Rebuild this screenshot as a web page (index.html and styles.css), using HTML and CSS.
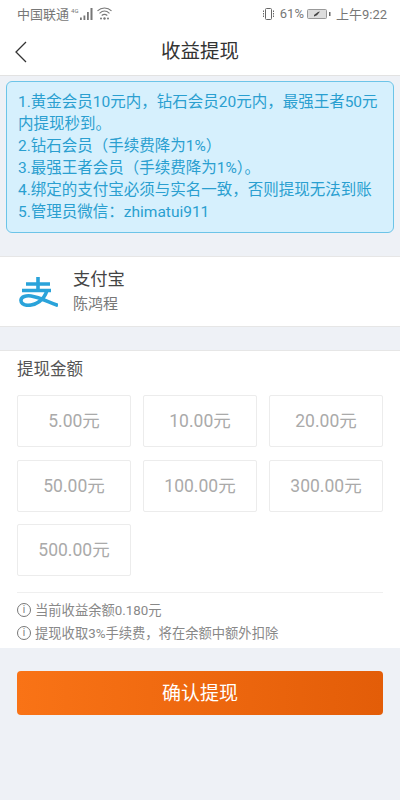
FILE: index.html
```html
<!DOCTYPE html>
<html lang="zh-CN">
<head>
<meta charset="UTF-8">
<meta name="viewport" content="width=device-width, initial-scale=1.0">
<title>收益提现</title>
<link rel="stylesheet" href="styles.css">
</head>
<body>

<div class="top">
  <div class="status">
    <div class="status-side">
      <span>中国联通</span>
      <span class="net">4G</span>
      <svg class="signal" width="13" height="12" viewBox="0 0 13 12"><path d="M0 9.500h1.800V12H0zM3.500 7.500h1.800V12H3.500zM7 4h1.800v8H7zM10.500 0h2v12h-2z" fill="#777"/></svg>
      <svg class="wifi" width="15" height="13" viewBox="0 0 15 13" fill="none" stroke="#777" stroke-width="1.100"><path d="M.5 3.800c4-3.800 10-3.800 14 0M2.500 6.300c3-2.700 7-2.700 10 0M4.700 8.500c1.700-1.300 3.900-1.300 5.600 0"/><circle cx="4" cy="11.500" r="1" fill="#777" stroke="none"/><circle cx="7.500" cy="11.500" r="1.200" fill="#777" stroke="none"/><circle cx="11" cy="11.500" r="1" fill="#777" stroke="none"/></svg>
    </div>
    <div class="status-side">
      <svg class="vibrate" width="13" height="12" viewBox="0 0 13 12" fill="none" stroke="#666"><rect x="3.500" y=".5" width="6" height="11" rx="1"/><path d="M1.500 2.500v7M11.500 2.500v7" stroke-dasharray="1.500 1"/></svg>
      <span class="pct">61%</span>
      <svg class="batt" width="24" height="10" viewBox="0 0 24 10"><rect x=".5" y=".5" width="19" height="9" rx="1" fill="#ddd" stroke="#999"/><path d="M7 7.500l3-1.200 3-3.800-2 .5-4 3z" fill="#444"/><rect x="22" y="3" width="1.500" height="4" fill="#666"/></svg>
      <span>上午9:22</span>
    </div>
  </div>
  <div class="header">
    <svg class="back" width="13" height="22" viewBox="0 0 13 22" fill="none" stroke="#333" stroke-width="1.300"><path d="M12 1L2 11l10 10"/></svg>
    <h1>收益提现</h1>
  </div>
</div>

<div class="notice">
  1.黄金会员10元内，钻石会员20元内，最强王者50元内提现秒到。<br>
  2.钻石会员（手续费降为1%）<br>
  3.最强王者会员（手续费降为1%）。<br>
  4.绑定的支付宝必须与实名一致，否则提现无法到账<br>
  5.管理员微信：zhimatui911
</div>

<div class="account">
  <svg class="alipay" width="39" height="30" viewBox="0 0 39 30" fill="none" stroke="#2aa3da" stroke-width="3.600"><path d="M7 7h24M19 0v13M3 13.500h29"/><path d="M28 13.500C25 23 17 28.300 9 28.300 4 28.300 1.700 25.500 2 23 2.400 19.800 7 18.300 12 19c9 1.300 17 6 27 9.500"/></svg>
  <div>
    <div class="account-name">支付宝</div>
    <div class="account-user">陈鸿程</div>
  </div>
</div>

<div class="panel">
  <div class="panel-title">提现金额</div>
  <div class="amounts">
    <div class="amount">5.00元</div>
    <div class="amount">10.00元</div>
    <div class="amount">20.00元</div>
    <div class="amount">50.00元</div>
    <div class="amount">100.00元</div>
    <div class="amount">300.00元</div>
    <div class="amount">500.00元</div>
  </div>
  <div class="tips">
    <div class="tip"><span class="tip-icon">i</span>当前收益余额0.180元</div>
    <div class="tip"><span class="tip-icon">i</span>提现收取3%手续费，将在余额中额外扣除</div>
  </div>
</div>

<button class="confirm">确认提现</button>

</body>
</html>
```

FILE: styles.css
```css
html, body {
  height: 100%;
}
body {
  margin: 0;
  background: #eef1f6;
  font-family: Roboto, "Noto Sans CJK SC", sans-serif;
  overflow: hidden;
}
.top {
  background: #fff;
  border-bottom: 1px solid #e2e2e2;
  height: 75px;
}
.status {
  height: 27px;
  padding: 0 13px 0 17px;
  display: flex;
  justify-content: space-between;
  align-items: center;
  font-size: 13px;
  color: #777;
}
.status-side {
  display: flex;
  align-items: center;
}
.net {
  width: 9px;
  margin: -6px 0 0 2px;
  font-size: 6px;
}
.signal {
  margin-right: 4px;
}
.vibrate {
  margin-right: 5px;
}
.pct {
  margin-right: 3px;
}
.batt {
  margin-right: 5px;
}
.header {
  height: 47px;
  display: flex;
  align-items: center;
  justify-content: center;
  position: relative;
}
.back {
  position: absolute;
  left: 14px;
  top: 14px;
}
.header h1 {
  margin: 0 0 3px;
  font-size: 19.500px;
  font-weight: 400;
  color: #333;
}
.notice {
  margin: 5px 6px 0;
  padding: 9px 10px 9px 11px;
  height: 152px;
  box-sizing: border-box;
  background: #d6f0fd;
  border: 1px solid #6cc4e8;
  border-radius: 6px;
  color: #2a9fd0;
  font-size: 15.500px;
  line-height: 22px;
}
.account {
  margin-top: 23px;
  height: 71px;
  background: #fff;
  border-top: 1px solid #e6e6e6;
  border-bottom: 1px solid #e6e6e6;
  box-sizing: border-box;
  display: flex;
  align-items: center;
  padding-left: 19px;
  gap: 15px;
}
.account-name {
  font-size: 17.300px;
  line-height: 20px;
  color: #444;
}
.account-user {
  margin-top: 4px;
  font-size: 15px;
  line-height: 22px;
  color: #777;
}
.panel {
  margin-top: 23px;
  height: 298px;
  box-sizing: border-box;
  background: #fff;
  border-top: 1px solid #e6e6e6;
  padding: 0 17px;
}
.panel-title {
  font-size: 16.500px;
  line-height: 22px;
  padding-top: 8px;
  color: #555;
}
.amounts {
  display: grid;
  grid-template-columns: repeat(3, 114px);
  grid-auto-rows: 52px;
  gap: 12.500px 12px;
  margin-top: 14px;
  padding-bottom: 16px;
  border-bottom: 1px solid #efefef;
}
.amount {
  display: flex;
  align-items: center;
  justify-content: center;
  padding-bottom: 3px;
  box-sizing: border-box;
  border: 1px solid #ececec;
  border-radius: 2px;
  font-size: 17.500px;
  color: #aaa;
}
.tips {
  margin-top: 5px;
}
.tip {
  display: flex;
  align-items: center;
  height: 23px;
  font-size: 13.300px;
  color: #888;
}
.tip-icon {
  width: 12px;
  height: 12px;
  border: 1px solid #777;
  border-radius: 50%;
  margin-right: 4px;
  font-size: 10px;
  line-height: 12px;
  text-align: center;
  color: #777;
}
.confirm {
  display: block;
  margin: 23px 17px 0;
  padding: 0 0 3px;
  width: 366px;
  height: 44px;
  border: none;
  border-radius: 4px;
  background: linear-gradient(90deg, #f97316, #e35d08);
  color: #fff;
  font-family: inherit;
  font-size: 19px;
}
```
